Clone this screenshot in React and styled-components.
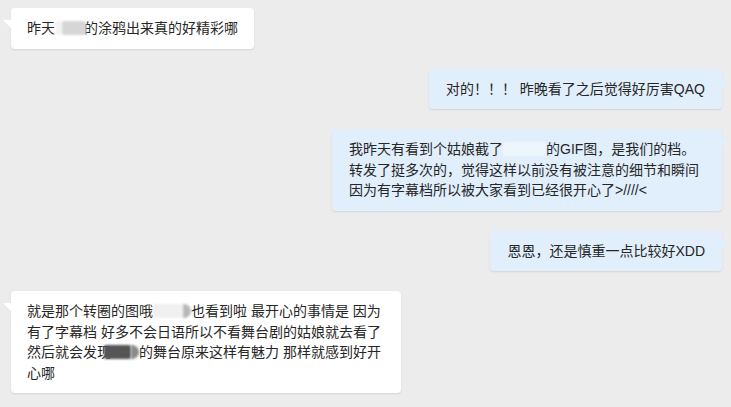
import React from 'react';
import styled, { createGlobalStyle, css } from 'styled-components';

const GlobalStyle = createGlobalStyle`
  html, body {
    margin: 0;
    padding: 0;
    background: #ececec;
  }
  body {
    font-family: "Liberation Sans", "Noto Sans CJK SC", sans-serif;
  }
`;

const Chat = styled.div`
  display: flex;
  flex-direction: column;
  gap: 20px;
  padding: 8px 9px 12px 11px;
  min-height: 407px;
  box-sizing: border-box;
  background: #ececec;
`;

const Bubble = styled.div`
  position: relative;
  box-sizing: border-box;
  max-width: 390px;
  width: ${(p) => (p.$width ? `${p.$width}px` : 'auto')};
  padding: 10px ${(p) => (p.$mine ? 17 : 16)}px;
  border-radius: 4px;
  font-size: 14px;
  line-height: 20.5px;
  color: #262626;
  white-space: nowrap;
  box-shadow: 0 1px 2px rgba(0, 0, 0, 0.1);

  ${(p) =>
    p.$mine
      ? css`
          align-self: flex-end;
          background: #e1effc;
          &::after {
            content: '';
            position: absolute;
            top: 10px;
            right: -8px;
            border-left: 8px solid #e1effc;
            border-bottom: 8px solid transparent;
          }
        `
      : css`
          align-self: flex-start;
          background: #ffffff;
          &::after {
            content: '';
            position: absolute;
            top: 12px;
            left: -8px;
            border-right: 8px solid #ffffff;
            border-bottom: 8px solid transparent;
          }
        `}
`;

const Blur = styled.span`
  display: inline-block;
  vertical-align: middle;
  width: ${(p) => p.$w}px;
  height: 14px;
  margin-left: ${(p) => p.$shift || 0}px;
  margin-right: ${(p) => p.$overlap || 0}px;
  margin-top: -2px;
  border-radius: ${(p) => (p.$round ? '0 7px 7px 0' : '2px')};
  background: ${(p) => p.$color};
  filter: blur(1px);
`;

const App = () => (
  <>
    <GlobalStyle />
    <Chat>
      <Bubble>
        昨天
        <Blur $w={7} $color="#f4f4f4" />
        <Blur $w={24} $color="#d6d6d6" $overlap={-2} />
        的涂鸦出来真的好精彩哪
      </Bubble>

      <Bubble $mine>对的！！！ 昨晚看了之后觉得好厉害QAQ</Bubble>

      <Bubble $mine $width={390}>
        我昨天有看到个姑娘截了
        <Blur $w={43} $color="#eef6fd" />
        的GIF图，是我们的档。
        <br />
        转发了挺多次的，觉得这样以前没有被注意的细节和瞬间
        <br />
        因为有字幕档所以被大家看到已经很开心了&gt;////&lt;
      </Bubble>

      <Bubble $mine>恩恩，还是慎重一点比较好XDD</Bubble>

      <Bubble $width={390}>
        就是那个转圈的图哦
        <Blur $w={30} $color="#f0f0f0" />
        <Blur $w={8} $color="#b8b8b8" $round />
        也看到啦 最开心的事情是 因为
        <br />
        有了字幕档 好多不会日语所以不看舞台剧的姑娘就去看了
        <br />
        然后就会发现
        <Blur $w={27} $color="#555555" $shift={-7} />
        <Blur $w={8} $color="#8a8a8a" $round />
        的舞台原来这样有魅力 那样就感到好开
        <br />
        心哪
      </Bubble>
    </Chat>
  </>
);

export default App;
